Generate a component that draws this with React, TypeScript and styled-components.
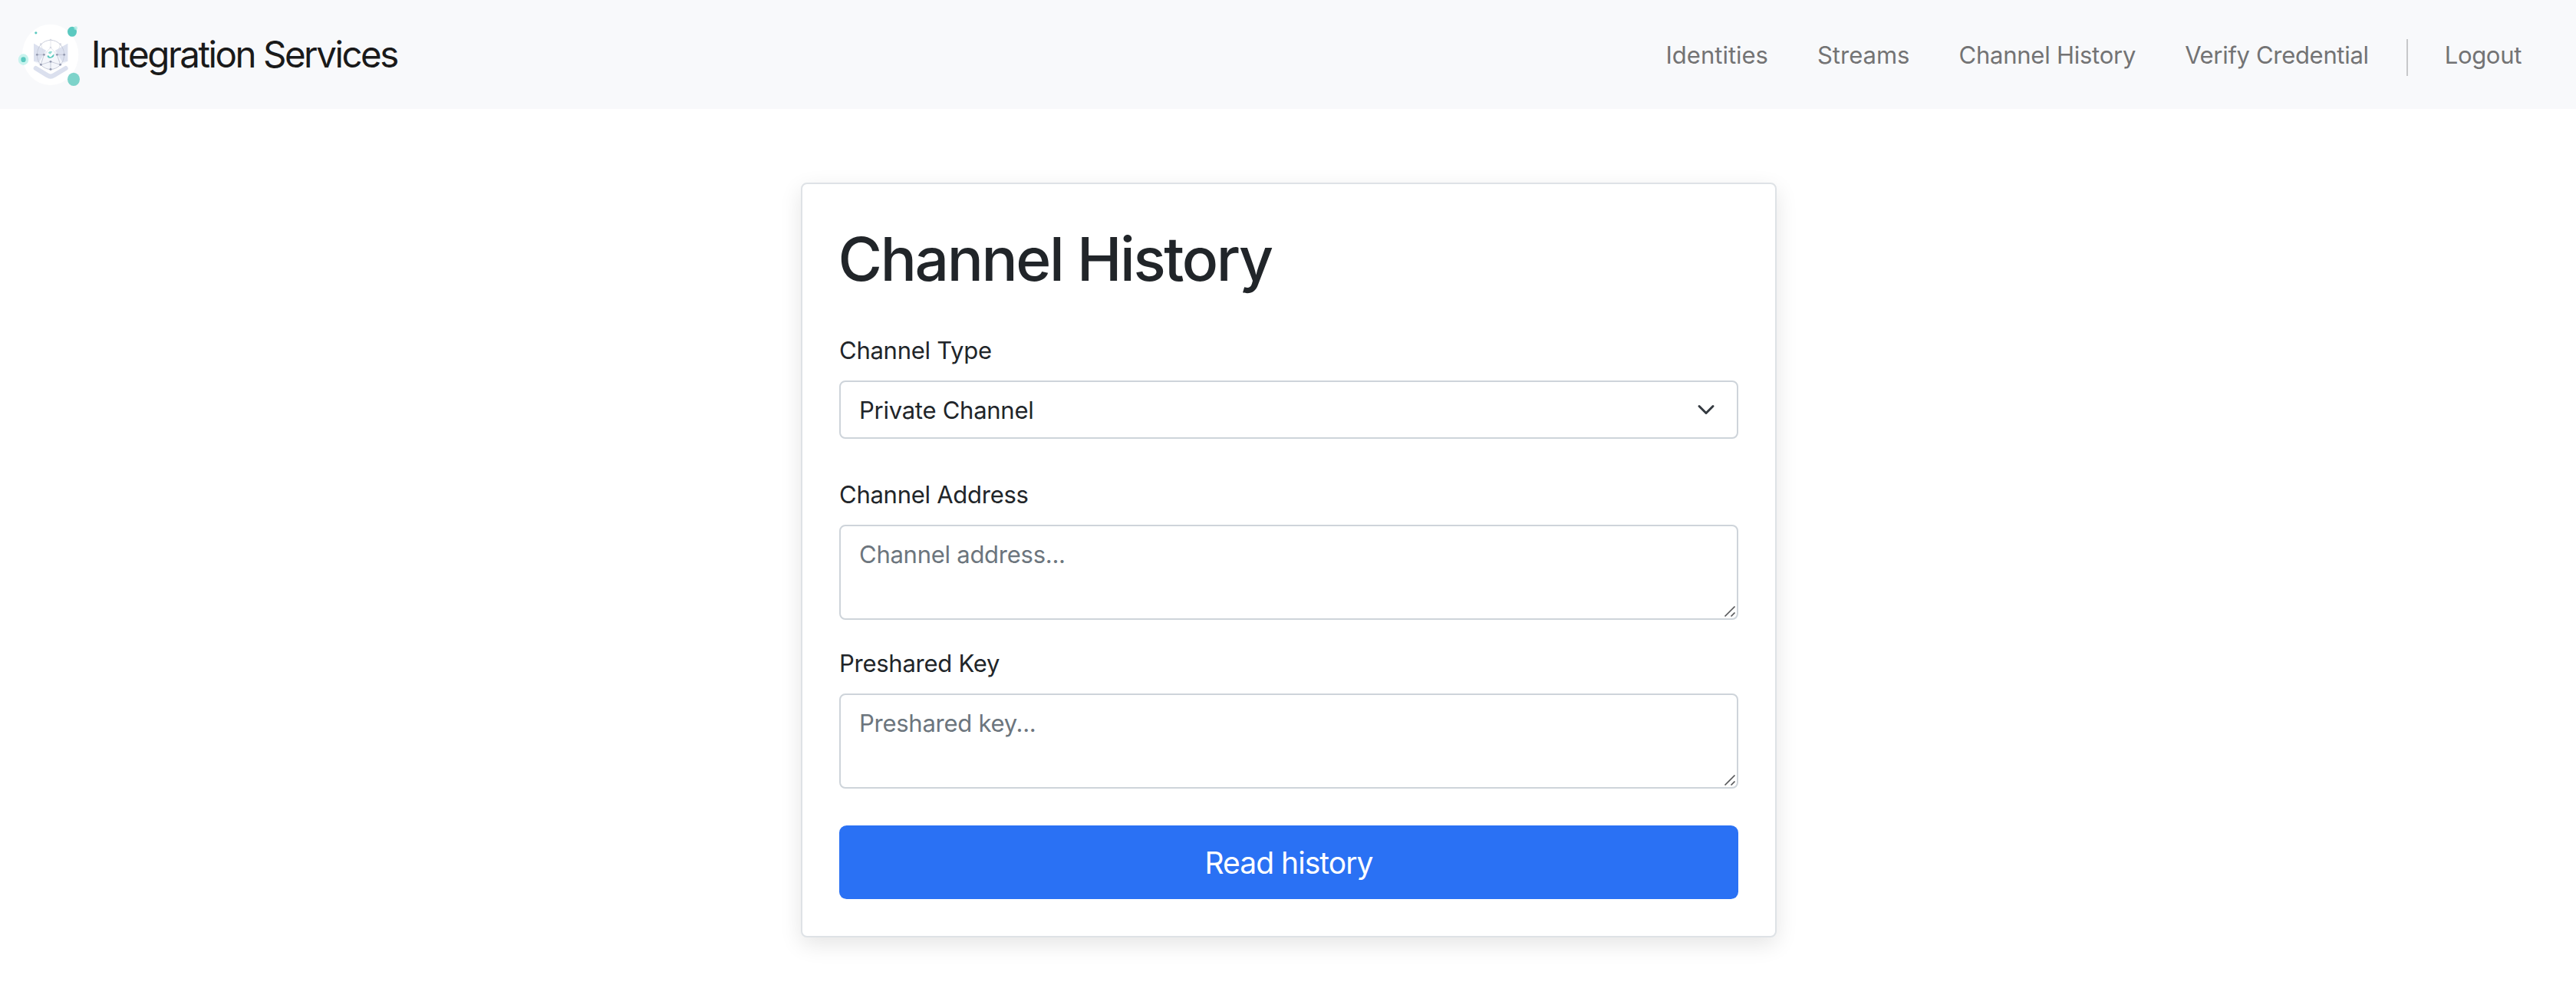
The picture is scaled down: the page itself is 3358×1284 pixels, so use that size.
import React from 'react';
import styled, { createGlobalStyle } from 'styled-components';

const GlobalStyle = createGlobalStyle`
  *, *::before, *::after { box-sizing: border-box; }
  body {
    margin: 0;
    background: #fff;
    color: #212529;
    font-family: Inter, Roboto, "Liberation Sans", sans-serif;
    font-size: 31px;
    line-height: 48px;
    letter-spacing: -0.26px;
  }
`;

const Navbar = styled.header`
  display: flex;
  align-items: center;
  justify-content: space-between;
  height: 142px;
  padding: 0 71px 0 22px;
  background: #f8f9fb;
`;

const Brand = styled.a`
  display: flex;
  align-items: center;
  gap: 12.7px;
  color: #1a1a1a;
  font-size: 47.5px;
  font-weight: 400;
  line-height: 72px;
  letter-spacing: -2.5px;
  text-decoration: none;
`;

const NavList = styled.nav`
  display: flex;
  align-items: center;
  gap: 64px;
`;

const NavLink = styled.a<{ $tracking?: number }>`
  padding-top: 1px;
  color: #737374;
  letter-spacing: ${({ $tracking = 0 }) => $tracking}px;
  white-space: nowrap;
  text-decoration: none;
`;

const Divider = styled.span`
  width: 2px;
  height: 48px;
  margin: 8px -16.5px 0 -14.5px;
  background: #c7c8ca;
`;

const Main = styled.main`
  display: flex;
  justify-content: center;
  padding: 96px 0 62px 2px;
`;

const Card = styled.form`
  display: flex;
  flex-direction: column;
  width: 1272px;
  padding: 48px;
  border: 2px solid #dee2e6;
  border-radius: 8px;
  background: #fff;
  box-shadow: 0 9px 29px rgba(0, 0, 0, 0.105);
`;

const Title = styled.h1`
  height: 96px;
  margin: 0 0 48px -1.5px;
  padding-top: 2px;
  font-size: 78.4px;
  font-weight: 500;
  line-height: 96px;
  letter-spacing: -2.34px;
`;

const Field = styled.div<{ $gap: number }>`
  display: flex;
  flex-direction: column;
  gap: 16px;
  margin-bottom: ${({ $gap }) => $gap}px;
`;

const Label = styled.label`
  display: block;
  height: 48px;
  padding-top: 1px;
`;

const Select = styled.div`
  display: flex;
  align-items: center;
  justify-content: space-between;
  height: 76px;
  padding: 0 28px 0 24px;
  border: 2px solid #ced4da;
  border-radius: 8px;
`;

const SelectValue = styled.span`
  padding-top: 2px;
`;

const AreaWrap = styled.div`
  position: relative;
  display: flex;
`;

const TextArea = styled.textarea`
  width: 100%;
  height: 124px;
  padding: 13px 24px 11px;
  border: 2px solid #ced4da;
  border-radius: 8px;
  background: #fff;
  color: #212529;
  font: inherit;
  letter-spacing: inherit;
  resize: none;
  outline: none;
  &::placeholder { color: #6c757d; opacity: 1; }
`;

const Grip = styled.svg`
  position: absolute;
  right: 2px;
  bottom: 2px;
  pointer-events: none;
`;

const SubmitButton = styled.button`
  height: 96px;
  padding: 2px 0 0;
  border: 0;
  border-radius: 9.6px;
  background: #2a71f4;
  color: #fff;
  font: inherit;
  font-size: 39px;
  letter-spacing: -0.96px;
`;

const nodes = [
  [145, 211], [160, 250], [198, 268], [236, 250], [251, 211],
  [172, 211], [223, 211], [198, 238],
];
const paleNodes = [[160, 170], [198, 153], [236, 170], [198, 183]];

function Logo() {
  return (
    <svg width="84" height="84" viewBox="66 84 252 252" aria-hidden="true">
      <ellipse cx="197" cy="211" rx="110" ry="119" fill="#fff" />
      <path d="M132 167 198 207 265 167V237L198 275 132 237Z" fill="#f4f6fb" />
      <path d="M132 167 180 194 152 241 132 236Z" fill="#dce1ef" />
      <path d="M265 167 216 194 245 241 265 236Z" fill="#dce1ef" />
      <path d="M140 264 186 292Q198 300 210 292L257 264" fill="none" stroke="#dbe0ee" strokeWidth="18" strokeLinecap="round" strokeLinejoin="round" />
      <ellipse cx="198" cy="211" rx="53" ry="57" fill="none" stroke="#c2c6d5" strokeWidth="2.5" />
      <g fill="none" stroke="#b3b8c9" strokeWidth="2">
        <path d="M145 211H172L160 250 198 238 236 250 223 211H251" />
        <path d="M198 238V268" />
        <path d="M160 170 172 211 198 183 223 211 236 170M198 153V183" stroke="#d9dce6" />
      </g>
      {nodes.map(([x, y]) => <circle key={`${x}-${y}`} cx={x} cy={y} r="4.3" fill="#9399b0" />)}
      {paleNodes.map(([x, y]) => <circle key={`${x}-${y}`} cx={x} cy={y} r="4" fill="#d6d9e3" />)}
      <circle cx="198" cy="212" r="14" fill="#fff" />
      <path d="M184 215A14 14 0 0 0 211 208L200 219Q194 222 190 214Z" fill="#5ac8bd" />
      <path d="M188 204A13 13 0 0 1 205 199L197 209Z" fill="#8fdcd4" />
      <circle cx="140.500" cy="125.500" r="4.800" fill="#5bc9c0" />
      <ellipse cx="91.500" cy="230" rx="20" ry="22" fill="#c8f3ee" />
      <ellipse cx="91.500" cy="230" rx="9.500" ry="10" fill="#5bc9bf" />
      <ellipse cx="282" cy="121" rx="18" ry="19.500" fill="#5bc9c0" />
      <circle cx="296" cy="107" r="7" fill="#a9e9e3" opacity="0.75" />
      <ellipse cx="288" cy="307" rx="24" ry="26" fill="#7dd3ca" />
    </svg>
  );
}

function Area({ id, placeholder }: { id: string; placeholder: string }) {
  return (
    <AreaWrap>
      <TextArea id={id} placeholder={placeholder} />
      <Grip width="20" height="20" viewBox="0 0 20 20">
        <path d="M4.500 17.500 17.500 4.500M12.500 17.500 17.500 12.500" stroke="#57585a" strokeWidth="1.700" />
      </Grip>
    </AreaWrap>
  );
}

export default function App() {
  return (
    <>
      <GlobalStyle />
      <Navbar>
        <Brand>
          <Logo />
          Integration Services
        </Brand>
        <NavList>
          <NavLink>Identities</NavLink>
          <NavLink>Streams</NavLink>
          <NavLink $tracking={-0.24}>Channel History</NavLink>
          <NavLink $tracking={-0.32}>Verify Credential</NavLink>
          <Divider />
          <NavLink $tracking={-0.31}>Logout</NavLink>
        </NavList>
      </Navbar>
      <Main>
        <Card>
          <Title>Channel History</Title>
          <Field $gap={48}>
            <Label>Channel Type</Label>
            <Select>
              <SelectValue>Private Channel</SelectValue>
              <svg width="24" height="24" viewBox="0 0 16 16" fill="none">
                <path d="M2 5l6 6 6-6" stroke="#343a40" strokeWidth="2" strokeLinecap="round" strokeLinejoin="round" />
              </svg>
            </Select>
          </Field>
          <Field $gap={32}>
            <Label htmlFor="address">Channel Address</Label>
            <Area id="address" placeholder="Channel address..." />
          </Field>
          <Field $gap={48}>
            <Label htmlFor="key">Preshared Key</Label>
            <Area id="key" placeholder="Preshared key..." />
          </Field>
          <SubmitButton type="button">Read history</SubmitButton>
        </Card>
      </Main>
    </>
  );
}
